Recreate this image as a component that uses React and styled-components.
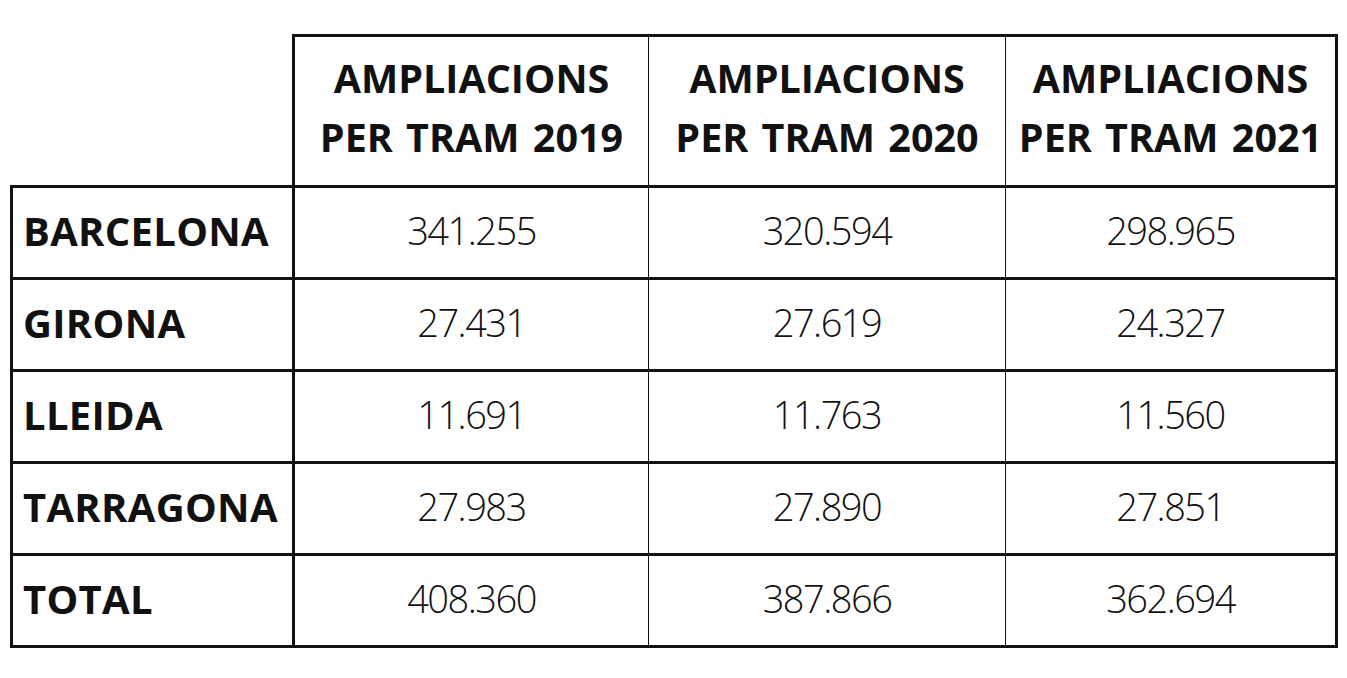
import React from 'react';
import styled, { createGlobalStyle } from 'styled-components';

// * --------- GLOBAL --------- *
const GlobalStyle = createGlobalStyle`
    html, body {
        margin: 0;
        padding: 0;
        background: #ffffff;
    }
    body {
        font-family: "Open Sans", "Liberation Sans", sans-serif;
        color: #111111;
    }
`

// * --------- DATA --------- *
const years = ['2019', '2020', '2021']
const colWidths = [282, 355, 357, 331]

const rows = [
    { name: 'BARCELONA', values: ['341.255', '320.594', '298.965'] },
    { name: 'GIRONA', values: ['27.431', '27.619', '24.327'] },
    { name: 'LLEIDA', values: ['11.691', '11.763', '11.560'] },
    { name: 'TARRAGONA', values: ['27.983', '27.890', '27.851'] },
    { name: 'TOTAL', values: ['408.360', '387.866', '362.694'] },
]

// * ---------- STYLE ---------- *
const Page = styled.div`
    padding: 34px 0 0 10px;
    width: 1347px;
    height: 678px;
    box-sizing: border-box;
`

const Table = styled.table`
    border-collapse: collapse;
    table-layout: fixed;
    width: 1325px;
`

const Col = styled.col`
    width: ${p => p.$w}px;
`

const Corner = styled.th`
    border: none;
    padding: 0;
`

const HeadCell = styled.th`
    height: 142px;
    padding: 0 0 6px;
    border-top: 3px solid #111;
    border-bottom: 3px solid #111;
    border-left: ${p => (p.$first ? '3px' : '1px')} solid #111;
    border-right: ${p => (p.$last ? '3px' : '1px')} solid #111;
    font-size: 39.5px;
    font-weight: 700;
    line-height: 59px;
    word-spacing: 3px;
    text-align: center;
    vertical-align: middle;
    color: #111;
`

const BodyRow = styled.tr`
    height: 92px;
`

const LabelCell = styled.td`
    border: 3px solid #111;
    padding: 0 0 5px 10px;
    font-size: 40px;
    font-weight: 700;
    letter-spacing: 0.3px;
    text-align: left;
    white-space: nowrap;
`

const ValueCell = styled.td`
    border-top: 3px solid #111;
    border-bottom: 3px solid #111;
    border-left: 1px solid #111;
    border-right: ${p => (p.$last ? '3px' : '1px')} solid #111;
    padding: 0 0 5px;
    font-size: 38px;
    font-weight: 300;
    letter-spacing: -1.5px;
    text-align: center;
`

const App = () => {
    return (
        <Page>
            <GlobalStyle />
            <Table>
                <colgroup>
                    {colWidths.map((w, i) => <Col key={i} $w={w} />)}
                </colgroup>
                <thead>
                    <tr>
                        <Corner />
                        {years.map((y, i) => (
                            <HeadCell key={y} $first={i === 0} $last={i === years.length - 1}>
                                AMPLIACIONS<br />PER TRAM {y}
                            </HeadCell>
                        ))}
                    </tr>
                </thead>
                <tbody>
                    {rows.map(r => (
                        <BodyRow key={r.name}>
                            <LabelCell>{r.name}</LabelCell>
                            {r.values.map((v, i) => (
                                <ValueCell key={i} $last={i === r.values.length - 1}>{v}</ValueCell>
                            ))}
                        </BodyRow>
                    ))}
                </tbody>
            </Table>
        </Page>
    );
};

export default App;
